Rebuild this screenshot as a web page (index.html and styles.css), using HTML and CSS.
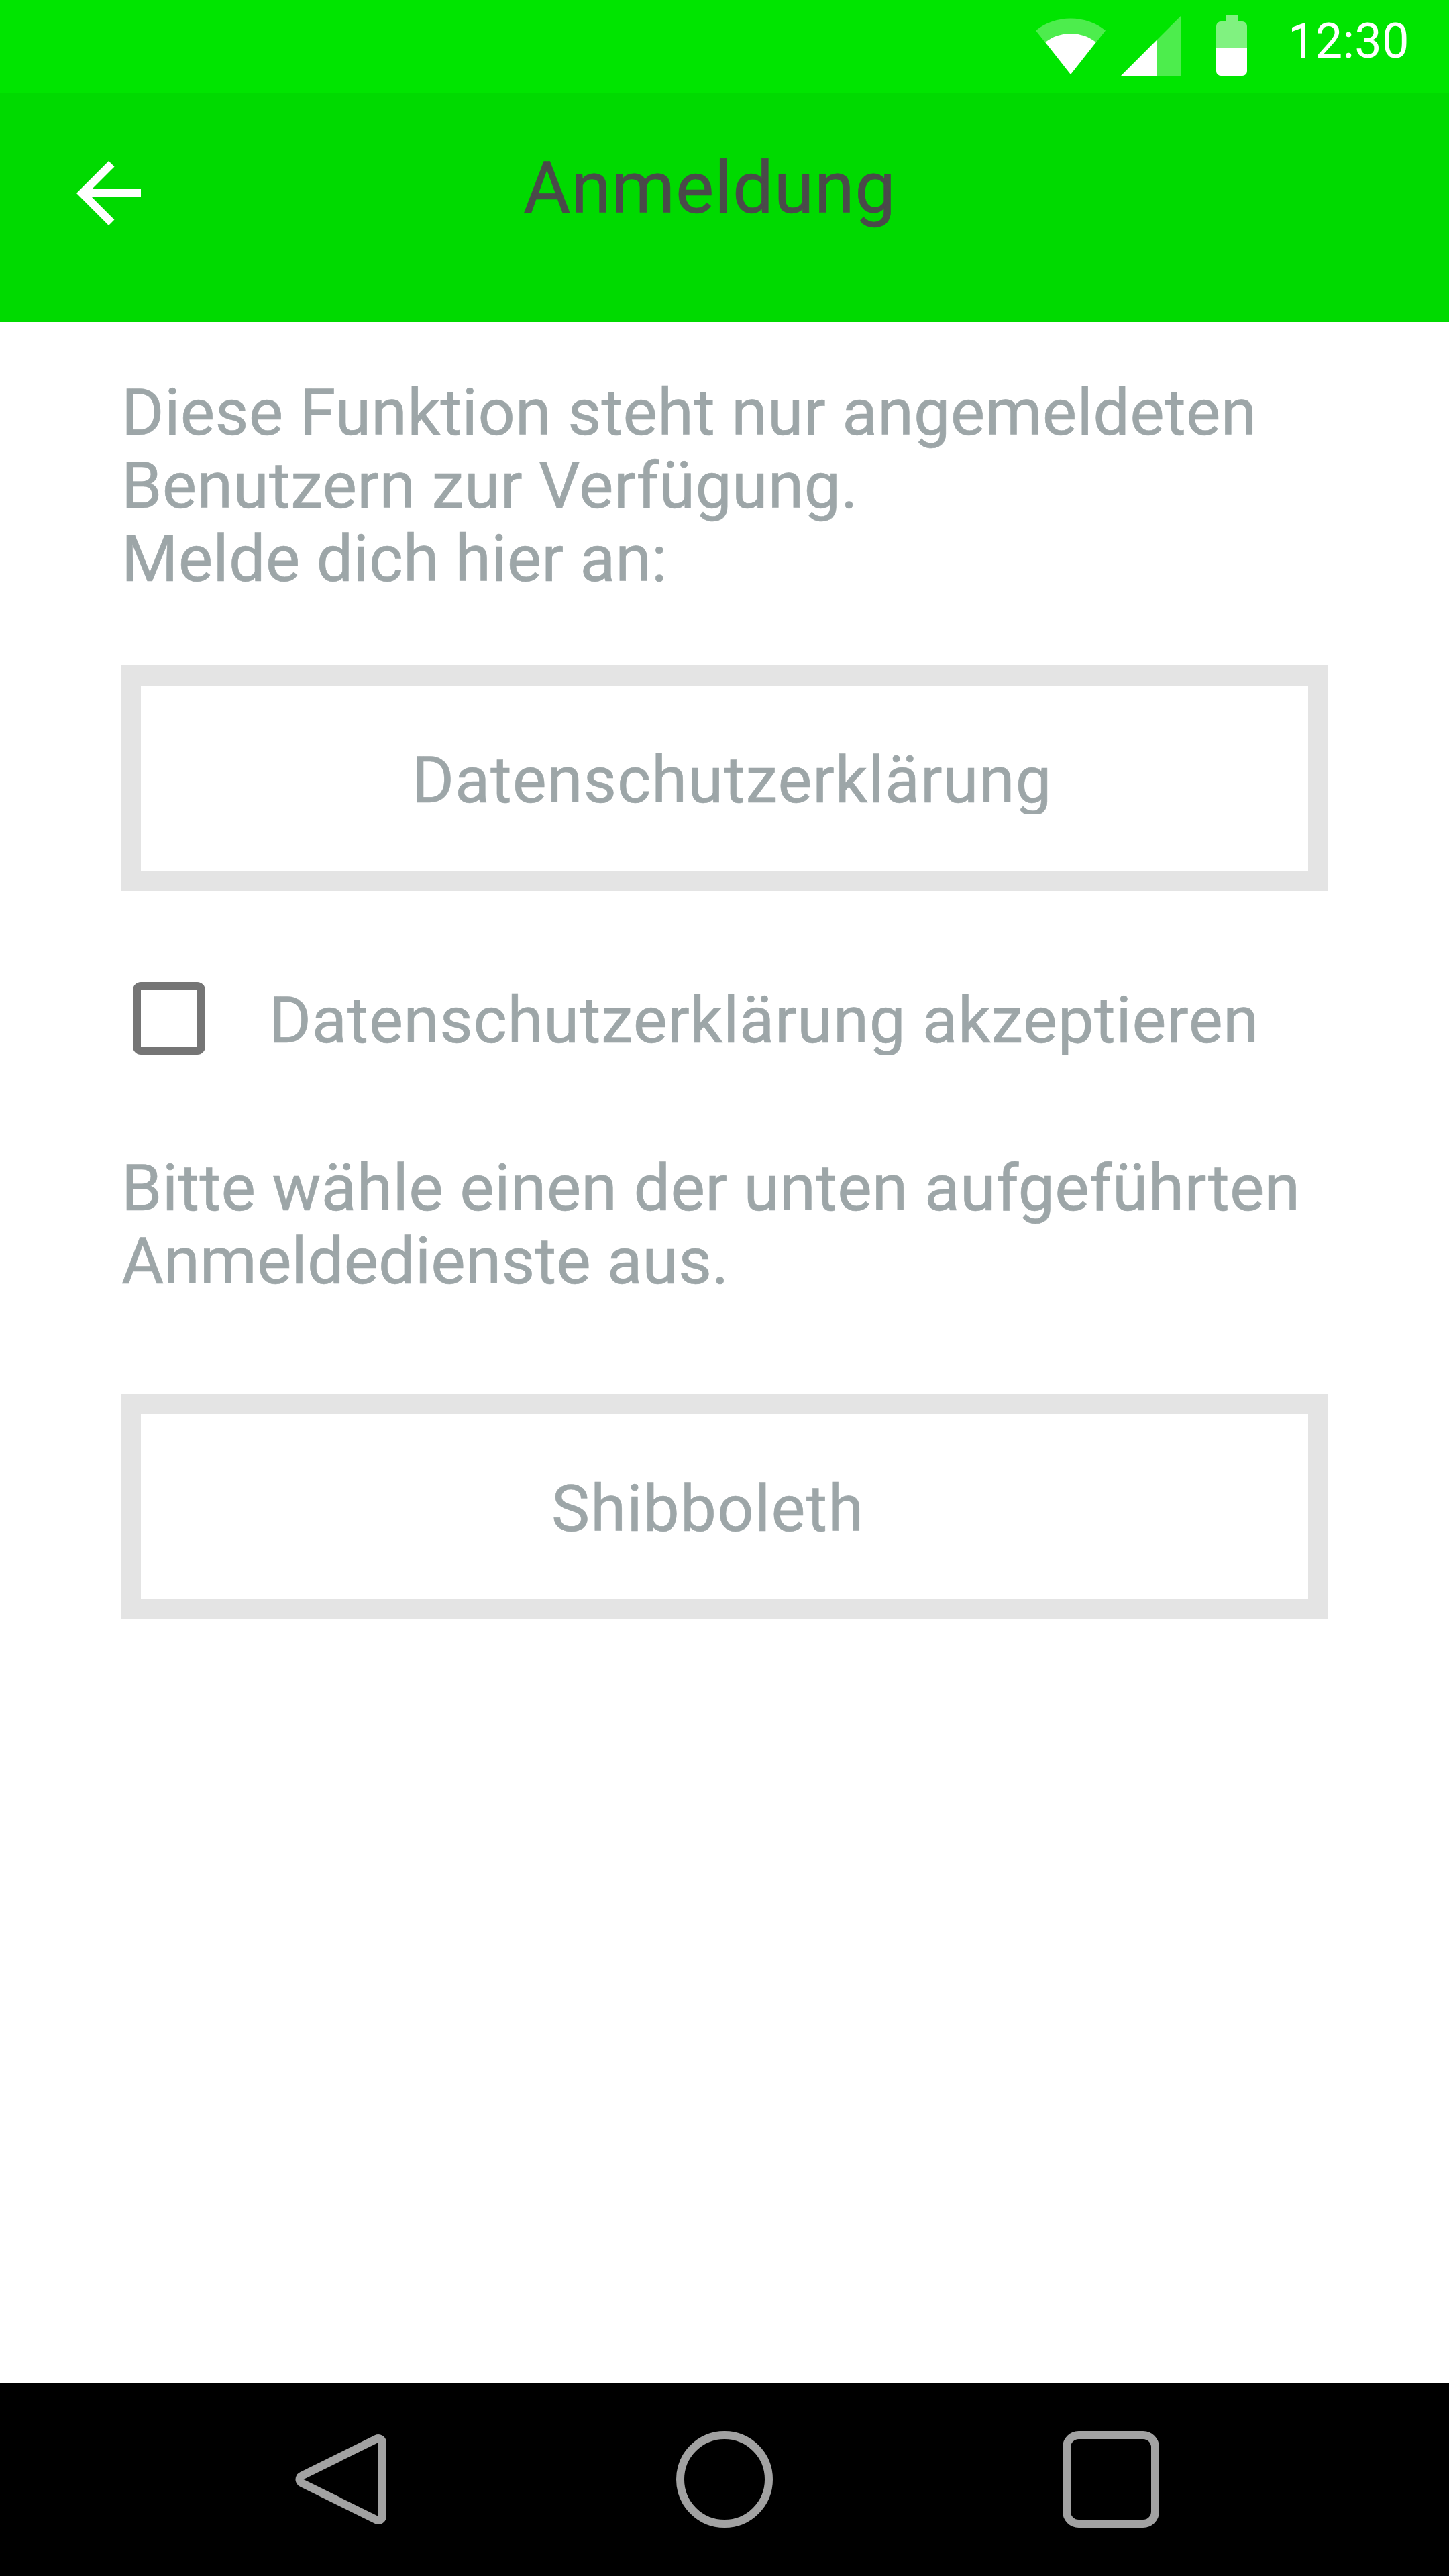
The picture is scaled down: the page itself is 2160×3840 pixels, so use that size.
FILE: index.html
```html
<!DOCTYPE html>
<html lang="de">
<head>
<meta charset="utf-8">
<title>Anmeldung</title>
<link rel="stylesheet" href="styles.css">
</head>
<body>
<div class="screen">
  <div class="status-bar">
    <svg class="wifi" width="104" height="84" viewBox="0 0 104 84">
      <path d="M0 18.5A84 84 0 0 1 104 18.5L52 84Z" fill="#fff" fill-opacity=".3"/>
      <path d="M14.3 36A61 61 0 0 1 89.7 36L52 84Z" fill="#fff"/>
    </svg>
    <svg class="signal" width="90" height="90" viewBox="0 0 90 90">
      <path d="M54 36L90 0V90H54Z" fill="#fff" fill-opacity=".3"/>
      <path d="M0 90L54 36V90Z" fill="#fff"/>
    </svg>
    <svg class="battery" width="46" height="90" viewBox="0 0 46 90">
      <path d="M0 49V16a7 7 0 0 1 7-7H14V0H32V9H39a7 7 0 0 1 7 7V49Z" fill="#fff" fill-opacity=".5"/>
      <path d="M0 49H46V83a7 7 0 0 1-7 7H7a7 7 0 0 1-7-7Z" fill="#fff"/>
    </svg>
    <span class="clock">12:30</span>
  </div>

  <header class="app-bar">
    <svg width="144" height="144" viewBox="0 0 24 24">
      <path d="M20 11H7.83l5.59-5.59L12 4l-8 8 8 8 1.41-1.41L7.83 13H20v-2z" fill="#fff"/>
    </svg>
    <h1 class="title">Anmeldung</h1>
  </header>

  <main class="content">
    <p class="text">
      <span class="line track-normal">Diese Funktion steht nur angemeldeten</span>
      <span class="line track-normal">Benutzern zur Verfügung.</span>
      <span class="line track-tight">Melde dich hier an:</span>
    </p>

    <button class="button button-privacy" type="button"><span class="label">Datenschutzerklärung</span></button>

    <label class="consent">
      <span class="checkbox"></span>
      <span class="label">Datenschutzerklärung akzeptieren</span>
    </label>

    <p class="text">
      <span class="line track-normal">Bitte wähle einen der unten aufgeführten</span>
      <span class="line">Anmeldedienste aus.</span>
    </p>

    <button class="button button-shibboleth" type="button"><span class="label">Shibboleth</span></button>
  </main>

  <nav class="nav-bar">
    <svg width="144" height="144" viewBox="0 0 144 144">
      <path d="M20.500 72L132 17V127Z" fill="#000" stroke="#a2a2a2" stroke-width="24" stroke-linejoin="round" paint-order="stroke"/>
    </svg>
    <svg width="144" height="144" viewBox="0 0 144 144">
      <circle cx="72" cy="72" r="66" fill="none" stroke="#a2a2a2" stroke-width="12"/>
    </svg>
    <svg width="144" height="144" viewBox="0 0 144 144">
      <rect x="6" y="6" width="132" height="132" rx="18" fill="none" stroke="#a2a2a2" stroke-width="12"/>
    </svg>
  </nav>
</div>
</body>
</html>
```
FILE: styles.css
```css
* {
  box-sizing: border-box;
}

body {
  margin: 0;
  background: #fff;
  font-family: Roboto, sans-serif;
}

svg {
  display: block;
  flex: none;
}

.screen {
  display: flex;
  flex-direction: column;
  width: 2160px;
  height: 3840px;
  overflow: hidden;
}

.status-bar {
  display: flex;
  flex: none;
  align-items: flex-start;
  justify-content: flex-end;
  height: 138px;
  padding: 19px 60px 0 0;
  background: #00e500;
}

.wifi {
  margin: 8px 23px 0 0;
}

.signal {
  margin: 4px 52px 0 0;
}

.battery {
  margin: 4px 61px 0 0;
}

.clock {
  width: 180px;
  color: #fff;
  font-size: 72px;
  line-height: 85px;
  letter-spacing: 0.3px;
  white-space: nowrap;
}

.app-bar {
  display: flex;
  flex: none;
  align-items: flex-start;
  gap: 546px;
  height: 342px;
  padding: 78px 0 0 90px;
  background: #00da00;
}

.title {
  margin: 1px 0 0;
  color: #4a4a4a;
  font-size: 108px;
  font-weight: 400;
  line-height: 126px;
  letter-spacing: 0.74px;
  -webkit-text-stroke: 0.6px;
}

.content {
  display: flex;
  flex: 1;
  flex-direction: column;
  padding: 80px 180px 0;
  color: #9da6a8;
  -webkit-text-stroke: 0.6px;
}

.text {
  margin: 0;
  padding-left: 1px;
  font-size: 97px;
  line-height: 110px;
  white-space: nowrap;
}

.line {
  display: block;
  height: 109px;
}

.track-tight {
  letter-spacing: 0.1px;
}

.track-normal {
  letter-spacing: 0.26px;
}

.label {
  display: block;
  height: 108px;
  overflow: hidden;
  font-size: 96px;
  line-height: 114px;
  letter-spacing: 0.75px;
  white-space: nowrap;
}

.button {
  display: flex;
  align-items: center;
  height: 336px;
  margin: 0;
  padding: 0;
  border: 30px solid #e4e4e4;
  background: #fff;
  color: inherit;
  font-family: inherit;
}

.button-privacy {
  margin-top: 105px;
  padding-left: 404px;
}

.button-privacy .label {
  letter-spacing: 1px;
}

.button-shibboleth {
  margin-top: 144px;
  padding-left: 612px;
}

.button-shibboleth .label {
  overflow: visible;
  letter-spacing: 1.2px;
}

.consent {
  display: flex;
  gap: 95px;
  margin: 136px 0 144px;
  padding-left: 18px;
}

.checkbox {
  flex: none;
  width: 108px;
  height: 108px;
  border: 12px solid #757575;
  border-radius: 12px;
}

.nav-bar {
  display: flex;
  flex: none;
  align-items: center;
  justify-content: center;
  gap: 432px;
  height: 288px;
  background: #000;
}
```
